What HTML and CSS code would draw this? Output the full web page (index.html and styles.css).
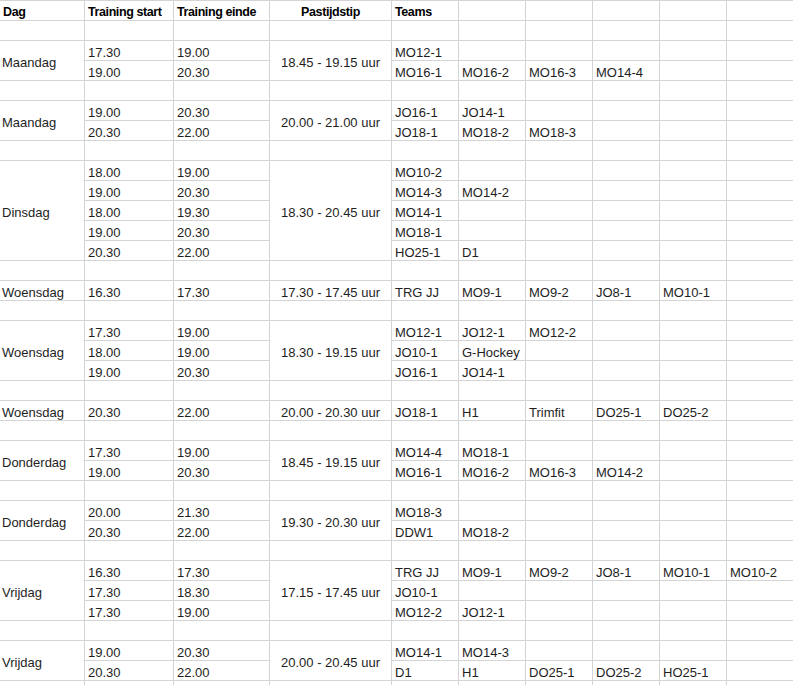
FILE: index.html
```html
<!DOCTYPE html>
<html lang="nl">
<head>
<meta charset="utf-8">
<title>Trainingsschema</title>
<link rel="stylesheet" href="styles.css">
</head>
<body>
<div class="sheet">
  <div class="hd">Dag</div><div class="hd">Training start</div><div class="hd">Training einde</div><div class="hd mid">Pastijdstip</div><div class="hd">Teams</div><div></div><div></div><div></div><div></div><div></div>
  <div></div><div></div><div></div><div></div><div></div><div></div><div></div><div></div><div></div><div></div>

  <div class="day span2">Maandag</div><div>17.30</div><div>19.00</div><div class="pause span2">18.45 - 19.15 uur</div><div>MO12-1</div><div></div><div></div><div></div><div></div><div></div>
  <div>19.00</div><div>20.30</div><div>MO16-1</div><div>MO16-2</div><div>MO16-3</div><div>MO14-4</div><div></div><div></div>
  <div></div><div></div><div></div><div></div><div></div><div></div><div></div><div></div><div></div><div></div>

  <div class="day span2">Maandag</div><div>19.00</div><div>20.30</div><div class="pause span2">20.00 - 21.00 uur</div><div>JO16-1</div><div>JO14-1</div><div></div><div></div><div></div><div></div>
  <div>20.30</div><div>22.00</div><div>JO18-1</div><div>MO18-2</div><div>MO18-3</div><div></div><div></div><div></div>
  <div></div><div></div><div></div><div></div><div></div><div></div><div></div><div></div><div></div><div></div>

  <div class="day span5">Dinsdag</div><div>18.00</div><div>19.00</div><div class="pause span5">18.30 - 20.45 uur</div><div>MO10-2</div><div></div><div></div><div></div><div></div><div></div>
  <div>19.00</div><div>20.30</div><div>MO14-3</div><div>MO14-2</div><div></div><div></div><div></div><div></div>
  <div>18.00</div><div>19.30</div><div>MO14-1</div><div></div><div></div><div></div><div></div><div></div>
  <div>19.00</div><div>20.30</div><div>MO18-1</div><div></div><div></div><div></div><div></div><div></div>
  <div>20.30</div><div>22.00</div><div>HO25-1</div><div>D1</div><div></div><div></div><div></div><div></div>
  <div></div><div></div><div></div><div></div><div></div><div></div><div></div><div></div><div></div><div></div>

  <div class="day">Woensdag</div><div>16.30</div><div>17.30</div><div class="pause">17.30 - 17.45 uur</div><div>TRG JJ</div><div>MO9-1</div><div>MO9-2</div><div>JO8-1</div><div>MO10-1</div><div></div>
  <div></div><div></div><div></div><div></div><div></div><div></div><div></div><div></div><div></div><div></div>

  <div class="day span3">Woensdag</div><div>17.30</div><div>19.00</div><div class="pause span3">18.30 - 19.15 uur</div><div>MO12-1</div><div>JO12-1</div><div>MO12-2</div><div></div><div></div><div></div>
  <div>18.00</div><div>19.00</div><div>JO10-1</div><div>G-Hockey</div><div></div><div></div><div></div><div></div>
  <div>19.00</div><div>20.30</div><div>JO16-1</div><div>JO14-1</div><div></div><div></div><div></div><div></div>
  <div></div><div></div><div></div><div></div><div></div><div></div><div></div><div></div><div></div><div></div>

  <div class="day">Woensdag</div><div>20.30</div><div>22.00</div><div class="pause">20.00 - 20.30 uur</div><div>JO18-1</div><div>H1</div><div>Trimfit</div><div>DO25-1</div><div>DO25-2</div><div></div>
  <div></div><div></div><div></div><div></div><div></div><div></div><div></div><div></div><div></div><div></div>

  <div class="day span2">Donderdag</div><div>17.30</div><div>19.00</div><div class="pause span2">18.45 - 19.15 uur</div><div>MO14-4</div><div>MO18-1</div><div></div><div></div><div></div><div></div>
  <div>19.00</div><div>20.30</div><div>MO16-1</div><div>MO16-2</div><div>MO16-3</div><div>MO14-2</div><div></div><div></div>
  <div></div><div></div><div></div><div></div><div></div><div></div><div></div><div></div><div></div><div></div>

  <div class="day span2">Donderdag</div><div>20.00</div><div>21.30</div><div class="pause span2">19.30 - 20.30 uur</div><div>MO18-3</div><div></div><div></div><div></div><div></div><div></div>
  <div>20.30</div><div>22.00</div><div>DDW1</div><div>MO18-2</div><div></div><div></div><div></div><div></div>
  <div></div><div></div><div></div><div></div><div></div><div></div><div></div><div></div><div></div><div></div>

  <div class="day span3">Vrijdag</div><div>16.30</div><div>17.30</div><div class="pause span3">17.15 - 17.45 uur</div><div>TRG JJ</div><div>MO9-1</div><div>MO9-2</div><div>JO8-1</div><div>MO10-1</div><div>MO10-2</div>
  <div>17.30</div><div>18.30</div><div>JO10-1</div><div></div><div></div><div></div><div></div><div></div>
  <div>17.30</div><div>19.00</div><div>MO12-2</div><div>JO12-1</div><div></div><div></div><div></div><div></div>
  <div></div><div></div><div></div><div></div><div></div><div></div><div></div><div></div><div></div><div></div>

  <div class="day span2">Vrijdag</div><div>19.00</div><div>20.30</div><div class="pause span2">20.00 - 20.45 uur</div><div>MO14-1</div><div>MO14-3</div><div></div><div></div><div></div><div></div>
  <div>20.30</div><div>22.00</div><div>D1</div><div>H1</div><div>DO25-1</div><div>DO25-2</div><div>HO25-1</div><div></div>
  <div></div><div></div><div></div><div></div><div></div><div></div><div></div><div></div><div></div><div></div>
</div>
</body>
</html>
```

FILE: styles.css
```css
html, body {
  margin: 0;
  padding: 0;
  background: #ffffff;
  overflow: hidden;
}

.sheet {
  display: grid;
  grid-template-columns: 84px 88px 95px 121px repeat(6, 66px);
  grid-auto-rows: 19px;
  gap: 1px;
  padding-top: 1px;
  width: 793px;
  background: #d4d4d4;
  font-family: "Liberation Sans", Arial, sans-serif;
  font-size: 13px;
  color: #1e1e1e;
}

.sheet > div {
  background: #ffffff;
  display: flex;
  align-items: flex-end;
  padding: 0 3px;
  line-height: 15px;
  white-space: nowrap;
  overflow: hidden;
}

.sheet > .hd {
  font-weight: bold;
  font-size: 12.5px;
  letter-spacing: -0.4px;
  color: #000000;
}

.sheet > .mid {
  justify-content: center;
}

.sheet > .day,
.sheet > .pause {
  align-items: center;
  padding-top: 4px;
}

.sheet > .day {
  padding-left: 2px;
}

.sheet > .pause {
  justify-content: center;
}

.span2 { grid-row: span 2; }
.span3 { grid-row: span 3; }
.span5 { grid-row: span 5; }
```
